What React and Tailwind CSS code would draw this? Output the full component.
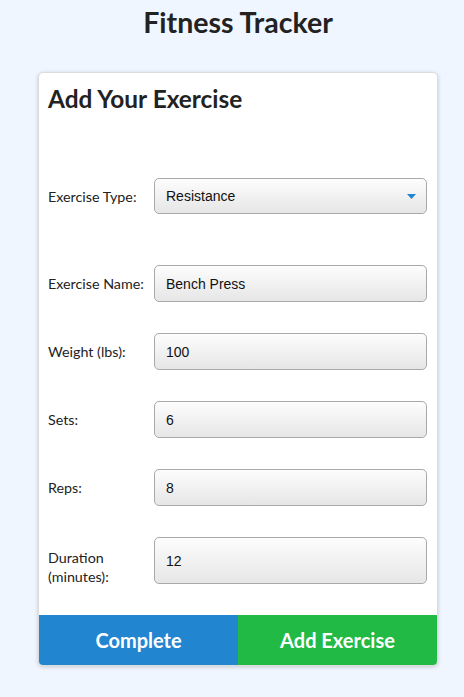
import React from "react";

const inputCls =
  "w-full h-[37px] rounded-[5px] border border-[#a9a9a9] bg-gradient-to-b from-[#fdfdfd] to-[#e6e6e6] pl-[11px] pr-3 text-[14px] text-[#111] outline-none font-['Liberation_Sans',Arial,sans-serif]";

function Row({ label, value, mt, tall }) {
  return (
    <div className={`flex items-center ${mt}`}>
      <label className={`w-[106px] shrink-0 text-[14.3px] leading-[19px] text-[#222] ${tall ? "translate-y-[6px]" : ""}`}>
        {label}
      </label>
      <input
        className={inputCls + (tall ? " !h-[47px]" : "")}
        defaultValue={value}
        readOnly
      />
    </div>
  );
}

export default function App() {
  return (
    <div className="min-h-[697px] w-full bg-[#eff6ff] pl-[12px] font-['Lato','Noto_Sans',sans-serif] text-[#222]">
      <h1 className="pt-[5px] text-center text-[28.5px] font-bold leading-[34px] text-[#222]">
        Fitness Tracker
      </h1>
      <div className="mx-auto mt-[33px] w-[400px] rounded-[5px] border border-[#dcdcdc] bg-white shadow-[0_1px_4px_rgba(0,0,0,0.18)]">
        <div className="pl-[9px] pr-[10px] pt-[12px] pb-[31px]">
          <h2 className="text-[24.4px] font-bold leading-[28px] text-[#222]">Add Your Exercise</h2>
          <div className="mt-[65px] flex items-center">
            <label className="w-[106px] shrink-0 text-[14.3px] leading-[19px] text-[#222]">Exercise Type:</label>
            <div className="relative h-[36px] w-full rounded-[5px] border border-[#a9a9a9] bg-gradient-to-b from-[#fdfdfd] to-[#e6e6e6] pl-[11px] text-[14px] leading-[34px] text-[#111] font-['Liberation_Sans',Arial,sans-serif]">
              Resistance
              <svg className="absolute right-[10px] top-[15px]" width="9" height="5" viewBox="0 0 9 5">
                <path d="M0 0 L9 0 L4.5 5 Z" fill="#2185d0" />
              </svg>
            </div>
          </div>
          <Row label="Exercise Name:" value="Bench Press" mt="mt-[51px]" />
          <Row label="Weight (lbs):" value="100" mt="mt-[31px]" />
          <Row label="Sets:" value="6" mt="mt-[31px]" />
          <Row label="Reps:" value="8" mt="mt-[31px]" />
          <Row label={<>Duration<br />(minutes):</>} value="12" mt="mt-[31px]" tall />
        </div>
        <div className="flex h-[50px] overflow-hidden rounded-b-[4px]">
          <button className="flex-1 bg-[#2185d0] text-[20px] font-bold text-white">Complete</button>
          <button className="flex-1 bg-[#21ba45] text-[20px] font-bold text-white">Add Exercise</button>
        </div>
      </div>
    </div>
  );
}
